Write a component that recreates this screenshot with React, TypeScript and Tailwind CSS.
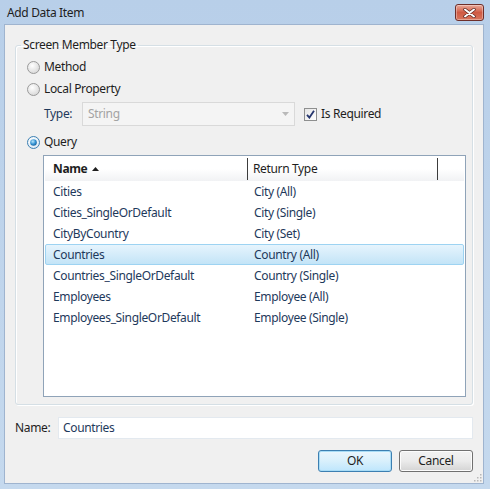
const rows = [
  ['Cities', 'City (All)'],
  ['Cities_SingleOrDefault', 'City (Single)'],
  ['CityByCountry', 'City (Set)'],
  ['Countries', 'Country (All)'],
  ['Countries_SingleOrDefault', 'Country (Single)'],
  ['Employees', 'Employee (All)'],
  ['Employees_SingleOrDefault', 'Employee (Single)'],
];

const Radio = ({ checked, label }: { checked?: boolean; label: string }) => (
  <div className="flex h-[22px] items-center gap-[4px]">
    <svg width="13" height="13" viewBox="0 0 13 13">
      <defs>
        <radialGradient id={checked ? 'rg-on' : 'rg-off'} cx="40%" cy="35%" r="70%">
          <stop offset="0%" stopColor="#ffffff" />
          <stop offset="100%" stopColor={checked ? '#dbe9f5' : '#d6d6d6'} />
        </radialGradient>
        <radialGradient id="dot" cx="40%" cy="35%" r="70%">
          <stop offset="0%" stopColor="#b9e6fb" />
          <stop offset="60%" stopColor="#2f8fd1" />
          <stop offset="100%" stopColor="#1a5f96" />
        </radialGradient>
      </defs>
      <circle cx="6.5" cy="6.5" r="6" fill={`url(#${checked ? 'rg-on' : 'rg-off'})`} stroke={checked ? '#3c7fb1' : '#9a9a9a'} strokeWidth="1" />
      {checked && <circle cx="6.5" cy="6.5" r="3.3" fill="url(#dot)" />}
    </svg>
    <span className="text-[#1e1e1e]">{label}</span>
  </div>
);

export default function App() {
  return (
    <div
      className="flex h-[489px] w-[490px] flex-col bg-gradient-to-b from-[#b8cfe9] to-[#c5d9ee] text-[12px] leading-[16px] tracking-[-0.35px]"
      style={{ fontFamily: '"Noto Sans", "Open Sans", sans-serif' }}
    >
      {/* Title bar */}
      <div className="flex h-[24px] shrink-0 items-start justify-between pl-[7px] pr-[6px]">
        <span className="mt-[5px] text-[12px] text-[#1e1e1e]">Add Data Item</span>
        <div className="mt-[4px] flex h-[17px] w-[29px] items-center justify-center rounded-[3px] border border-[#6e2e29] bg-gradient-to-b from-[#e9a99b] via-[#cf5a44] to-[#d8755d] shadow-[inset_0_0_0_1px_rgba(255,255,255,0.35)]">
          <svg width="13" height="10" viewBox="0 0 13 10">
            <path d="M2 1.5 L11 8.5 M11 1.5 L2 8.5" stroke="#5a2420" strokeWidth="3.4" strokeLinecap="round" />
            <path d="M2 1.5 L11 8.5 M11 1.5 L2 8.5" stroke="#ffffff" strokeWidth="2" strokeLinecap="round" />
          </svg>
        </div>
      </div>

      {/* Client area */}
      <div className="relative mb-[5px] ml-[4px] mr-[6px] flex flex-1 flex-col border border-[#9fb4cf] bg-[#f0f0f0] pl-[10px] pr-[10px] pt-[12px]">
        <fieldset className="rounded-[3px] border border-[#d5dfe5] pb-[7px] pl-[11px] pr-[6px] shadow-[inset_1px_1px_0_#ffffff,1px_1px_0_#ffffff]">
          <legend className="ml-[-6px] px-[2px] text-[#1e1e1e]">Screen Member Type</legend>
          <div className="mt-[3px] flex flex-col">
            <Radio label="Method" />
            <Radio label="Local Property" />
            <div className="mt-[2px] flex h-[24px] items-center">
              <span className="ml-[17px] w-[38px] text-[#1e395b]">Type:</span>
              <div className="flex h-[24px] w-[213px] items-center justify-between border border-[#d9d9d9] bg-[#f4f4f4] pl-[5px] pr-[5px] text-[#a3a3a3]">
                <span>String</span>
                <svg width="7" height="4" viewBox="0 0 7 4">
                  <path d="M0 0 H7 L3.5 4 Z" fill="#b9b9b9" />
                </svg>
              </div>
              <div className="ml-[9px] flex items-center gap-[4px]">
                <div className="flex h-[13px] w-[13px] items-center justify-center border border-[#8e8f8f] bg-gradient-to-br from-[#e6e6e6] to-[#ffffff]">
                  <svg width="9" height="9" viewBox="0 0 9 9">
                    <path d="M1 4.8 L3.4 7.6 L8 0.8" stroke="#26366e" strokeWidth="1.8" fill="none" />
                  </svg>
                </div>
                <span className="text-[#1e1e1e]">Is Required</span>
              </div>
            </div>
            <div className="mt-[5px]">
              <Radio checked label="Query" />
            </div>
            <div className="ml-[16px] mt-[2px] h-[242px] border border-[#8fa3b8] bg-white p-[1px]">
              <div className="flex h-[24px] items-stretch bg-gradient-to-b from-white via-white to-[#f1f2f4] text-[#1e1e1e]">
                <div className="flex w-[202px] items-center gap-[5px] pl-[8px] font-bold">
                  Name
                  <svg width="7" height="4" viewBox="0 0 7 4">
                    <path d="M0 4 H7 L3.5 0 Z" fill="#1e1e1e" />
                  </svg>
                </div>
                <div className="my-[1px] w-px bg-[#3c3c3c]" />
                <div className="flex w-[189px] items-center pl-[5px]">Return Type</div>
                <div className="my-[1px] w-px bg-[#3c3c3c]" />
                <div className="flex-1" />
              </div>
              {rows.map(([name, type]) => {
                const selected = name === 'Countries';
                return (
                  <div
                    key={name}
                    className={
                      selected
                        ? 'flex h-[21px] items-center rounded-[2px] border border-[#9dd3f2] bg-gradient-to-b from-[#e6f4fd] to-[#c3e4f7] text-[#1e395b]'
                        : 'flex h-[21px] items-center border border-transparent text-[#1e395b]'
                    }
                  >
                    <span className="w-[202px] pl-[7px]">{name}</span>
                    <span className="pl-[6px]">{type}</span>
                  </div>
                );
              })}
            </div>
          </div>
        </fieldset>

        <div className="mt-[12px] flex h-[22px] items-center">
          <span className="w-[43px] text-[#1e1e1e]">Name:</span>
          <div className="flex h-[22px] flex-1 items-center border border-[#e3e9ef] bg-white pl-[4px] text-[#1e395b]">
            Countries
          </div>
        </div>

        <div className="mt-[11px] flex justify-end gap-[7px]">
          <div className="flex h-[22px] w-[74px] items-center justify-center rounded-[3px] border border-[#3c7fb1] bg-gradient-to-b from-[#eaf6fd] via-[#d9f0fc] to-[#bee6fd] text-[#1e1e1e] shadow-[inset_0_0_0_1px_#a8dcf6]">
            OK
          </div>
          <div className="flex h-[22px] w-[74px] items-center justify-center rounded-[3px] border border-[#707070] bg-gradient-to-b from-[#f2f2f2] via-[#ebebeb] to-[#d4d4d4] text-[#1e1e1e] shadow-[inset_0_0_0_1px_#fcfcfc]">
            Cancel
          </div>
        </div>

        {/* resize grip */}
        <svg className="absolute bottom-[1px] right-[1px]" width="10" height="10" viewBox="0 0 10 10">
          {[
            [8, 2], [8, 5], [5, 5], [8, 8], [5, 8], [2, 8],
          ].map(([x, y]) => (
            <rect key={`${x}-${y}`} x={x} y={y} width="1.5" height="1.5" fill="#b8b8b8" />
          ))}
        </svg>
      </div>
    </div>
  );
}
